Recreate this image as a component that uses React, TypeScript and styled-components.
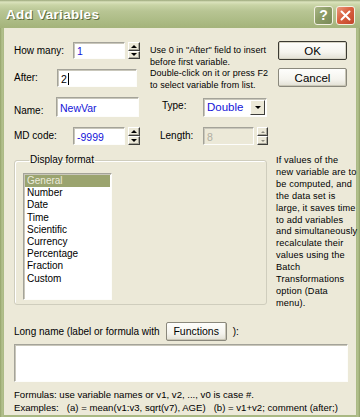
import React from 'react';
import styled, {createGlobalStyle} from 'styled-components';

const GlobalStyle = createGlobalStyle`
  html, body {
    margin: 0;
    padding: 0;
  }
  body {
    width: 360px;
    height: 417px;
    overflow: hidden;
    background: #ece9d8;
    font-family: "Liberation Sans", Arial, sans-serif;
  }
`;

const Window = styled.div`
  width: 360px;
  height: 417px;
  display: flex;
  flex-direction: column;
  background: linear-gradient(to right, #93a26a 0, #b3c18d 2px, #a9b883 4px, #a9b883 356px, #b3c18d 358px, #8f9e66 360px);
`;

const TitleBar = styled.div`
  height: 28px;
  flex: none;
  display: flex;
  align-items: center;
  padding: 0 5px 0 6px;
  box-sizing: border-box;
  background: linear-gradient(to bottom, #9aa67a 0, #dbe3bd 2px, #c9d4a6 5px, #b8c594 11px, #adbc86 20px, #a5b47c 27px, #a5b47c 28px);
`;

const Title = styled.div`
  color: #fff;
  font-weight: bold;
  font-size: 13.5px;
  letter-spacing: 0.3px;
  text-shadow: 1px 1px 0 #5d6b3b;
  margin-top: 1px;
`;

const CaptionButtons = styled.div`
  margin-left: auto;
  display: flex;
  gap: 3px;
  margin-top: 2px;
`;

const CaptionButton = styled.div<{$close?: boolean}>`
  width: 19px;
  height: 19px;
  box-sizing: border-box;
  border: 1px solid #f4f1e4;
  border-radius: 3px;
  display: flex;
  align-items: center;
  justify-content: center;
  color: #fff;
  font-weight: bold;
  font-size: 14px;
  background: ${p => p.$close
    ? 'linear-gradient(135deg, #eb9a7f 0, #d9603f 45%, #c2452a 100%)'
    : 'linear-gradient(135deg, #a9b685 0, #8c9c66 45%, #7a8a58 100%)'};
`;

const Body = styled.div`
  flex: 1;
  margin: 0 4px 4px 4px;
  background: #ece9d8;
  padding: 12px 9px 0 10px;
  display: flex;
  flex-direction: column;
  font-size: 10px;
  color: #000;
`;

const TopRow = styled.div`
  display: flex;
  align-items: flex-start;
  height: 47px;
`;

const Fields = styled.div`
  width: 136px;
  flex: none;
  display: flex;
  flex-direction: column;
`;

const FieldRow = styled.div<{$mt?: number}>`
  display: flex;
  align-items: center;
  margin-top: ${p => p.$mt ?? 0}px;
`;

const Label = styled.span<{$w: number; $align?: string; $mt?: number}>`
  width: ${p => p.$w}px;
  flex: none;
  font-size: 10px;
  line-height: 12px;
  align-self: ${p => p.$align ?? 'center'};
  margin-top: ${p => p.$mt ?? 0}px;
`;

const Box = styled.div<{$w: number; $h: number; $disabled?: boolean; $gray?: boolean}>`
  width: ${p => p.$w}px;
  height: ${p => p.$h}px;
  flex: none;
  box-sizing: border-box;
  background: ${p => p.$disabled ? '#ece9d8' : '#fff'};
  border: 1px solid;
  border-color: #a4a399 #fdfdfb #fdfdfb #a4a399;
  box-shadow: inset 1px 1px 0 #c9c7bb;
  padding: 1px 0 0 3px;
  display: flex;
  align-items: center;
  font-size: 10.5px;
  color: ${p => p.$gray ? '#b0aea2' : '#1414d8'};
`;

const Plain = styled.span`
  color: #000;
`;

const Caret = styled.span`
  display: inline-block;
  width: 1px;
  height: 12px;
  background: #000;
  margin-left: 1px;
`;

const Spin = styled.div<{$h: number; $w?: number}>`
  width: ${p => p.$w ?? 12}px;
  height: ${p => p.$h}px;
  flex: none;
  margin-left: 3px;
  display: flex;
  flex-direction: column;
`;

const SpinBtn = styled.div`
  flex: 1;
  box-sizing: border-box;
  background: #ece9d8;
  border: 1px solid;
  border-color: #fff #3d3d3a #3d3d3a #fff;
  box-shadow: inset -1px -1px 0 #a9a79b;
  display: flex;
  align-items: center;
  justify-content: center;
`;

const Arrow = styled.span<{$down?: boolean; $gray?: boolean; $size?: number}>`
  width: 0;
  height: 0;
  border-left: ${p => p.$size ?? 3}px solid transparent;
  border-right: ${p => p.$size ?? 3}px solid transparent;
  ${p => p.$down
    ? `border-top: ${p.$size ?? 3}px solid ${p.$gray ? '#8d8b80' : '#000'};`
    : `border-bottom: ${p.$size ?? 3}px solid ${p.$gray ? '#8d8b80' : '#000'};`}
`;

const HelpText = styled.div`
  width: 128px;
  flex: none;
  margin-top: 5px;
  font-size: 9px;
  line-height: 11.5px;
  letter-spacing: 0.05px;
  white-space: nowrap;
`;

const ButtonCol = styled.div`
  width: 69px;
  flex: none;
  display: flex;
  flex-direction: column;
  gap: 8px;
  margin-top: 1px;
`;

const Button = styled.div<{$default?: boolean; $w?: number}>`
  width: ${p => p.$w ? `${p.$w}px` : 'auto'};
  height: 19px;
  box-sizing: border-box;
  border: 1px solid ${p => p.$default ? '#3b3a32' : '#8a887c'};
  border-radius: 2px;
  background: linear-gradient(to bottom, #fefefc 0, #f5f4ee 60%, #e2e0d4 100%);
  box-shadow: ${p => p.$default ? 'inset 0 0 0 1px #d8d5c6' : 'inset -1px -1px 0 #c9c6b6'};
  display: flex;
  align-items: center;
  justify-content: center;
  font-size: ${p => p.$w ? 10.5 : 11.5}px;
  color: #000;
`;

const Row = styled.div<{$mt: number}>`
  display: flex;
  align-items: center;
  margin-top: ${p => p.$mt}px;
`;

const Select = styled.div`
  width: 64px;
  height: 19px;
  flex: none;
  box-sizing: border-box;
  background: #fff;
  border: 1px solid;
  border-color: #a4a399 #fdfdfb #fdfdfb #a4a399;
  box-shadow: inset 1px 1px 0 #c9c7bb;
  display: flex;
`;

const SelectText = styled.span`
  flex: 1;
  padding-left: 3px;
  font-size: 11.5px;
  line-height: 17px;
  color: #1414d8;
`;

const DropBtn = styled.div`
  width: 15px;
  margin: 1px 1px 1px 0;
  box-sizing: border-box;
  background: #ece9d8;
  border: 1px solid;
  border-color: #fff #3d3d3a #3d3d3a #fff;
  display: flex;
  align-items: center;
  justify-content: center;
`;

const MiddleRow = styled.div`
  display: flex;
  align-items: flex-start;
  margin-top: 9px;
`;

const Group = styled.fieldset`
  width: 253px;
  height: 151px;
  box-sizing: border-box;
  flex: none;
  margin: 0;
  padding: 7px 0 4px 8px;
  border: 1px solid #cfcdbd;
  border-radius: 3px;
  box-shadow: inset 1px 1px 0 #fff;
`;

const Legend = styled.legend`
  padding: 0 1px;
  margin-left: 6px;
  font-size: 10px;
  line-height: 12px;
`;

const ListBox = styled.div`
  width: 89px;
  height: 127px;
  box-sizing: border-box;
  background: #fff;
  border: 1px solid;
  border-color: #a4a399 #fdfdfb #fdfdfb #a4a399;
  box-shadow: inset 1px 1px 0 #c9c7bb;
  padding: 1px 1px 0 1px;
`;

const ListItem = styled.div<{$selected?: boolean}>`
  height: 12.2px;
  line-height: 12.2px;
  padding-left: 2px;
  font-size: 10px;
  background: ${p => p.$selected ? '#9ba46f' : 'transparent'};
  color: ${p => p.$selected ? '#ecebdc' : '#000'};
`;

const SideNote = styled.div`
  margin-left: 9px;
  margin-top: 1px;
  font-size: 9.2px;
  line-height: 11.9px;
  letter-spacing: 0.15px;
  white-space: nowrap;
`;

const LongNameRow = styled.div`
  display: flex;
  align-items: center;
  margin-top: 12px;
  font-size: 10px;
`;

const TextArea = styled.div`
  width: 334px;
  height: 38px;
  margin-top: 3px;
  box-sizing: border-box;
  background: #fff;
  border: 1px solid;
  border-color: #a4a399 #fdfdfb #fdfdfb #a4a399;
  box-shadow: inset 1px 1px 0 #c9c7bb;
`;

const Notes = styled.div`
  margin-top: 6px;
  font-size: 9.6px;
  line-height: 13.5px;
  white-space: pre;
`;

const formats = ['General', 'Number', 'Date', 'Time', 'Scientific', 'Currency', 'Percentage', 'Fraction', 'Custom'];

const sideLines = [
  'If values of the',
  'new variable are to',
  'be computed, and',
  'the data set is',
  'large, it saves time',
  'to add variables',
  'and simultaneously',
  'recalculate their',
  'values using the',
  'Batch',
  'Transformations',
  'option (Data',
  'menu).',
];

const SpinBox: React.FC<{h: number; w?: number; gray?: boolean}> = ({h, w, gray}) => (
  <Spin $h={h} $w={w}>
    <SpinBtn><Arrow $gray={gray} $size={gray ? 2 : 3}/></SpinBtn>
    <SpinBtn><Arrow $down $gray={gray} $size={gray ? 2 : 3}/></SpinBtn>
  </Spin>
);

const App: React.FC = () => {
  return (
    <>
      <GlobalStyle/>
      <Window>
        <TitleBar>
          <Title>Add Variables</Title>
          <CaptionButtons>
            <CaptionButton>?</CaptionButton>
            <CaptionButton $close>
              <svg width="11" height="11" viewBox="0 0 11 11">
                <path d="M1.5 1.5 L9.5 9.5 M9.5 1.5 L1.5 9.5" stroke="#fff" strokeWidth="2" strokeLinecap="round"/>
              </svg>
            </CaptionButton>
          </CaptionButtons>
        </TitleBar>
        <Body>
          <TopRow>
            <Fields>
              <FieldRow $mt={2}>
                <Label $w={59}>How many:</Label>
                <Box $w={52} $h={17}>1</Box>
                <SpinBox h={17}/>
              </FieldRow>
              <FieldRow $mt={10}>
                <Label $w={43}>After:</Label>
                <Box $w={80} $h={18}><Plain>2</Plain><Caret/></Box>
              </FieldRow>
            </Fields>
            <HelpText>
              Use 0 in "After" field to insert<br/>
              before first variable.<br/>
              Double-click on it or press F2<br/>
              to select variable from list.
            </HelpText>
            <ButtonCol>
              <Button $default>OK</Button>
              <Button>Cancel</Button>
            </ButtonCol>
          </TopRow>

          <Row $mt={10}>
            <Label $w={42} $align="flex-end">Name:</Label>
            <Box $w={83} $h={20}>NewVar</Box>
            <Label $w={41} $align="flex-start" $mt={3} style={{marginLeft: 23}}>Type:</Label>
            <Select>
              <SelectText>Double</SelectText>
              <DropBtn><Arrow $down/></DropBtn>
            </Select>
          </Row>

          <Row $mt={10}>
            <Label $w={59}>MD code:</Label>
            <Box $w={52} $h={18}>-9999</Box>
            <SpinBox h={18}/>
            <Label $w={43} style={{marginLeft: 20}}>Length:</Label>
            <Box $w={51} $h={18} $disabled $gray>8</Box>
            <SpinBox h={18} w={11} gray/>
          </Row>

          <MiddleRow>
            <Group>
              <Legend>Display format</Legend>
              <ListBox>
                {formats.map((f, i) => (
                  <ListItem key={f} $selected={i === 0}>{f}</ListItem>
                ))}
              </ListBox>
            </Group>
            <SideNote>
              {sideLines.map(l => <div key={l}>{l}</div>)}
            </SideNote>
          </MiddleRow>

          <LongNameRow>
            <span>Long name (label or formula with</span>
            <Button $w={61} style={{marginLeft: 6}}>Functions</Button>
            <span style={{marginLeft: 6}}>):</span>
          </LongNameRow>
          <TextArea/>
          <Notes>
            {'Formulas: use variable names or v1, v2, ..., v0 is case #.\n'}
            {'Examples:   (a) = mean(v1:v3, sqrt(v7), AGE)   (b) = v1+v2; comment (after;)'}
          </Notes>
        </Body>
      </Window>
    </>
  );
};

export default App;
